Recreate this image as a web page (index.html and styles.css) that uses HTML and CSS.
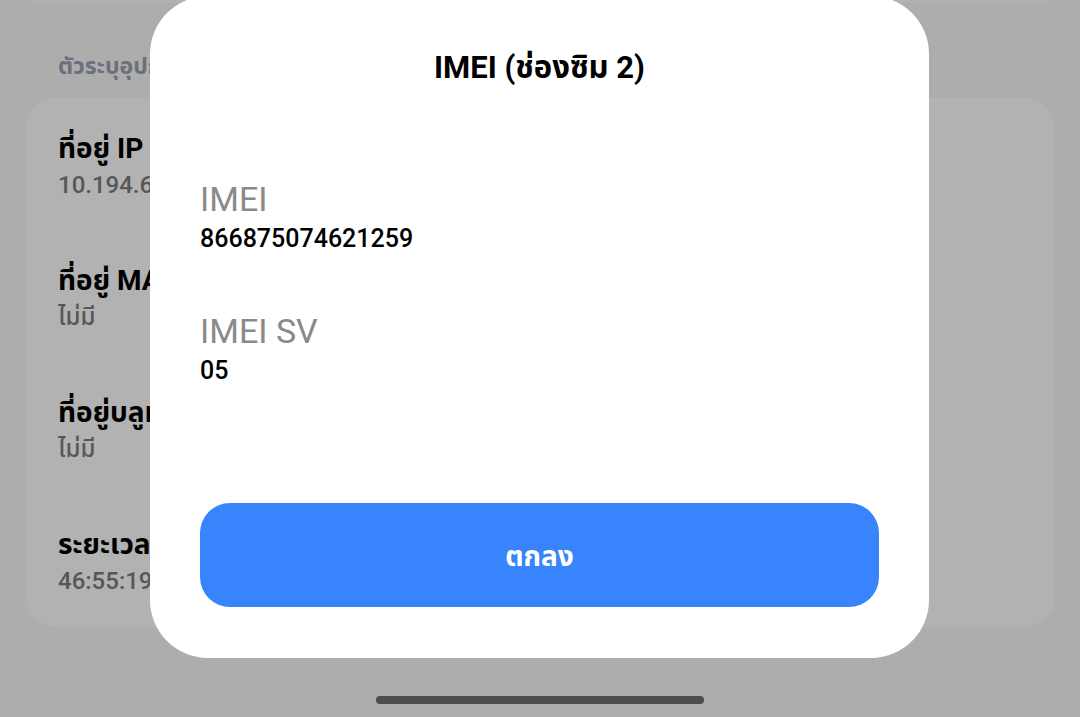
FILE: index.html
```html
<!DOCTYPE html>
<html lang="th">
  <head>
    <meta charset="UTF-8" />
    <meta name="viewport" content="width=device-width, initial-scale=1.0" />
    <title>IMEI (ช่องซิม 2)</title>
    <link rel="stylesheet" href="styles.css">
  </head>
  <body>
    <!-- Settings page behind the dialog -->
    <div class="screen">
      <div class="topCard"></div>

      <div class="sectionTitle">ตัวระบุอุปกรณ์</div>

      <div class="card">
        <div class="item">
          <div class="itemTitle">ที่อยู่ IP</div>
          <div class="itemValue">10.194.64.118</div>
        </div>
        <div class="item">
          <div class="itemTitle">ที่อยู่ MAC ของ Wi-Fi</div>
          <div class="itemValue">ไม่มี</div>
        </div>
        <div class="item">
          <div class="itemTitle">ที่อยู่บลูทูธ</div>
          <div class="itemValue">ไม่มี</div>
        </div>
        <div class="item">
          <div class="itemTitle">ระยะเวลาทำงาน</div>
          <div class="itemValue">46:55:19</div>
        </div>
      </div>
    </div>

    <!-- IMEI dialog -->
    <div class="dialog">
      <h2 class="dialogTitle">IMEI (ช่องซิม 2)</h2>

      <div class="field">
        <div class="fieldLabel">IMEI</div>
        <div class="fieldValue">866875074621259</div>
      </div>

      <div class="field">
        <div class="fieldLabel">IMEI SV</div>
        <div class="fieldValue">05</div>
      </div>

      <button class="okButton" type="button">ตกลง</button>
    </div>

    <div class="homeBar"></div>
  </body>
</html>
```

FILE: styles.css
```css
* {
  margin: 0;
  padding: 0;
  box-sizing: border-box;
}

body {
  width: 1080px;
  height: 717px;
  overflow: hidden;
  position: relative;
  font-family: Roboto, "Noto Sans", "Noto Sans Thai", Loma, Garuda, sans-serif;
  background-color: #adadad;
  color: #000;
}

/* Page behind the dim */
.screen {
  padding: 0 25px 0 26px;
}

.topCard {
  height: 33px;
  margin-top: -30px;
  background-color: #b2b2b2;
  border-radius: 30px;
}

.sectionTitle {
  padding-left: 32px;
  margin-top: 49px;
  height: 30px;
  line-height: 30px;
  font-size: 23px;
  font-weight: 700;
  color: #6b6f7e;
  white-space: nowrap;
}

.card {
  margin-top: 16px;
  height: 529px;
  padding: 18px 32px 0;
  background-color: #b2b2b2;
  border-radius: 30px;
}

.item {
  height: 132px;
  padding-top: 15px;
}

.itemTitle {
  font-size: 28px;
  font-weight: 700;
  line-height: 36px;
  white-space: nowrap;
}

.itemValue {
  font-size: 24px;
  font-weight: 500;
  line-height: 36px;
  color: #575757;
}

/* Dialog */
.dialog {
  position: absolute;
  left: 150px;
  top: -4px;
  width: 779px;
  height: 662px;
  padding: 52px 50px 51px;
  background-color: #fff;
  border-radius: 58px;
  display: flex;
  flex-direction: column;
}

.dialogTitle {
  text-align: center;
  font-size: 31px;
  font-weight: 700;
  line-height: 40px;
  margin-bottom: 91px;
}

.field {
  margin-bottom: 57px;
}

.fieldLabel {
  font-size: 34px;
  font-weight: 400;
  line-height: 41px;
  color: #8a8a8a;
}

.fieldValue {
  margin-top: 4px;
  font-size: 25px;
  font-weight: 500;
  line-height: 30px;
}

.okButton {
  margin-top: auto;
  height: 104px;
  width: 100%;
  border: none;
  border-radius: 30px;
  background-color: #3784fd;
  color: #fff;
  font-family: inherit;
  font-size: 28px;
  font-weight: 700;
  padding-top: 4px;
}

.homeBar {
  position: absolute;
  left: 376px;
  top: 696px;
  width: 328px;
  height: 8px;
  border-radius: 4px;
  background-color: #4d4d4d;
}
```
